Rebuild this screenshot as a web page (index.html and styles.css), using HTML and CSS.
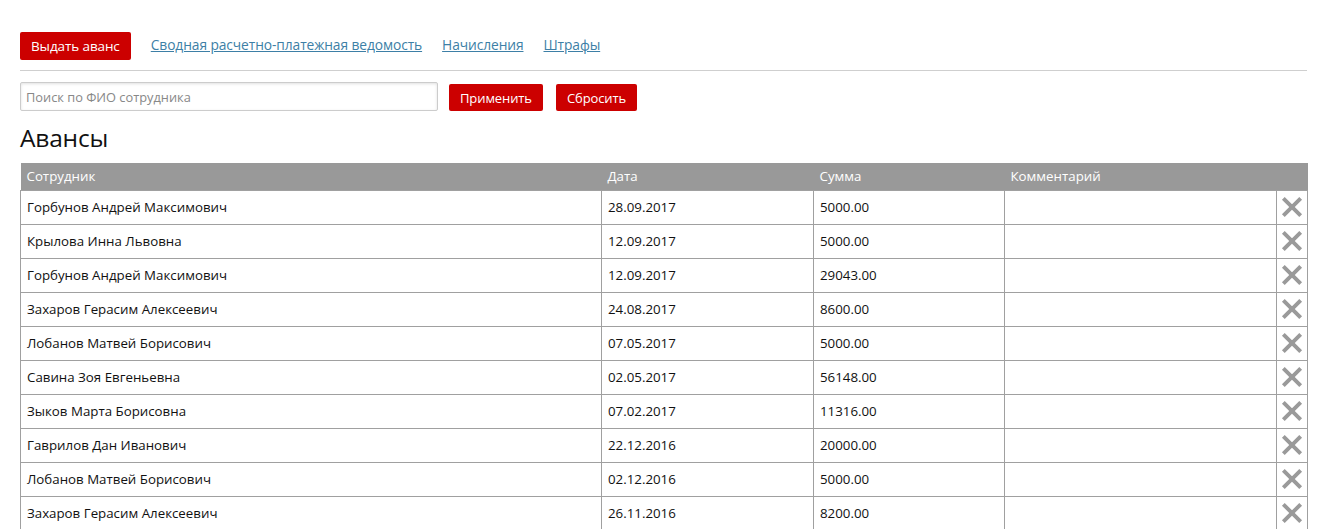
FILE: index.html
```html
<!DOCTYPE html>
<html lang="ru">
<head>
<meta charset="utf-8">
<title>Авансы</title>
<link rel="stylesheet" href="styles.css">
</head>
<body>
<div class="page">
  <div class="topbar">
    <button class="btn btn-lg">Выдать аванс</button>
    <a class="link" href="#">Сводная расчетно-платежная ведомость</a>
    <a class="link" href="#">Начисления</a>
    <a class="link" href="#">Штрафы</a>
  </div>
  <div class="filter">
    <input class="search" type="text" placeholder="Поиск по ФИО сотрудника">
    <button class="btn">Применить</button>
    <button class="btn">Сбросить</button>
  </div>
  <h1 class="title">Авансы</h1>
  <table class="grid">
    <colgroup>
      <col class="c-name"><col class="c-date"><col class="c-sum"><col class="c-comm"><col class="c-del">
    </colgroup>
    <thead>
      <tr><th>Сотрудник</th><th>Дата</th><th>Сумма</th><th>Комментарий</th><th></th></tr>
    </thead>
    <tbody>
      <tr><td>Горбунов Андрей Максимович</td><td>28.09.2017</td><td>5000.00</td><td></td><td class="del"><svg viewBox="0 0 24 24" class="x"><path d="M4 4L20 20M20 4L4 20"/></svg></td></tr>
      <tr><td>Крылова Инна Львовна</td><td>12.09.2017</td><td>5000.00</td><td></td><td class="del"><svg viewBox="0 0 24 24" class="x"><path d="M4 4L20 20M20 4L4 20"/></svg></td></tr>
      <tr><td>Горбунов Андрей Максимович</td><td>12.09.2017</td><td>29043.00</td><td></td><td class="del"><svg viewBox="0 0 24 24" class="x"><path d="M4 4L20 20M20 4L4 20"/></svg></td></tr>
      <tr><td>Захаров Герасим Алексеевич</td><td>24.08.2017</td><td>8600.00</td><td></td><td class="del"><svg viewBox="0 0 24 24" class="x"><path d="M4 4L20 20M20 4L4 20"/></svg></td></tr>
      <tr><td>Лобанов Матвей Борисович</td><td>07.05.2017</td><td>5000.00</td><td></td><td class="del"><svg viewBox="0 0 24 24" class="x"><path d="M4 4L20 20M20 4L4 20"/></svg></td></tr>
      <tr><td>Савина Зоя Евгеньевна</td><td>02.05.2017</td><td>56148.00</td><td></td><td class="del"><svg viewBox="0 0 24 24" class="x"><path d="M4 4L20 20M20 4L4 20"/></svg></td></tr>
      <tr><td>Зыков Марта Борисовна</td><td>07.02.2017</td><td>11316.00</td><td></td><td class="del"><svg viewBox="0 0 24 24" class="x"><path d="M4 4L20 20M20 4L4 20"/></svg></td></tr>
      <tr><td>Гаврилов Дан Иванович</td><td>22.12.2016</td><td>20000.00</td><td></td><td class="del"><svg viewBox="0 0 24 24" class="x"><path d="M4 4L20 20M20 4L4 20"/></svg></td></tr>
      <tr><td>Лобанов Матвей Борисович</td><td>02.12.2016</td><td>5000.00</td><td></td><td class="del"><svg viewBox="0 0 24 24" class="x"><path d="M4 4L20 20M20 4L4 20"/></svg></td></tr>
      <tr><td>Захаров Герасим Алексеевич</td><td>26.11.2016</td><td>8200.00</td><td></td><td class="del"><svg viewBox="0 0 24 24" class="x"><path d="M4 4L20 20M20 4L4 20"/></svg></td></tr>
    </tbody>
  </table>
</div>
</body>
</html>
```

FILE: styles.css
```css
* { box-sizing: border-box; }
html, body { margin: 0; padding: 0; background: #fff; }
body {
  font-family: "Open Sans", "Noto Sans", sans-serif;
  font-size: 13px;
  color: #111;
}
.page { padding: 32px 20px 0 20px; }
.topbar {
  display: flex;
  align-items: center;
  gap: 20px;
  padding-bottom: 10px;
  border-bottom: 1px solid #cfcfcf;
}
.btn {
  font-family: "Open Sans", "Noto Sans", sans-serif;
  font-size: 13px;
  color: #fff;
  background: #cc0000;
  border: 0;
  border-radius: 2px;
  height: 27px;
  padding: 0 11px;
  letter-spacing: -0.1px;
  cursor: pointer;
}
.btn-lg { height: 28px; padding: 0 11px; font-size: 13.5px; }
.link {
  color: #3d7fa6;
  text-decoration: underline;
  font-size: 13.8px;
  letter-spacing: -0.1px;
  margin-bottom: 3px;
}
.filter {
  display: flex;
  align-items: flex-end;
  gap: 11px;
  margin-top: 11px;
}
.filter .btn + .btn { margin-left: 2px; }
.search {
  width: 418px;
  height: 29px;
  border: 1px solid #ccc;
  border-radius: 2px;
  box-shadow: inset 0 1px 3px rgba(0,0,0,0.12);
  padding: 0 5px;
  font-family: "Open Sans", "Noto Sans", sans-serif;
  font-size: 12.8px;
}
.search::placeholder { color: #888; }
.title {
  font-family: "Open Sans", "Noto Sans", sans-serif;
  font-weight: 400;
  font-size: 24.5px;
  line-height: 30px;
  margin: 12px 0 10px 0;
  letter-spacing: -0.2px;
}
.grid {
  width: 1287px;
  border-collapse: collapse;
  table-layout: fixed;
}
.c-name { width: 581px; }
.c-date { width: 212px; }
.c-sum { width: 191px; }
.c-comm { width: 272px; }
.c-del { width: 31px; }
.grid th {
  background: #999;
  color: #fff;
  font-weight: 400;
  text-align: left;
  height: 27px;
  padding: 0 6px;
  font-size: 13.3px;
}
.grid td {
  border: 1px solid #a0a0a0;
  height: 34px;
  padding: 0 6px;
  font-size: 13.3px;
  color: #111;
}
.grid td.del { padding: 0; text-align: center; }
.x {
  width: 26px;
  height: 26px;
  display: block;
  margin: 0 auto;
}
.x path {
  stroke: #9a9a9a;
  stroke-width: 3.6;
  fill: none;
}
```
